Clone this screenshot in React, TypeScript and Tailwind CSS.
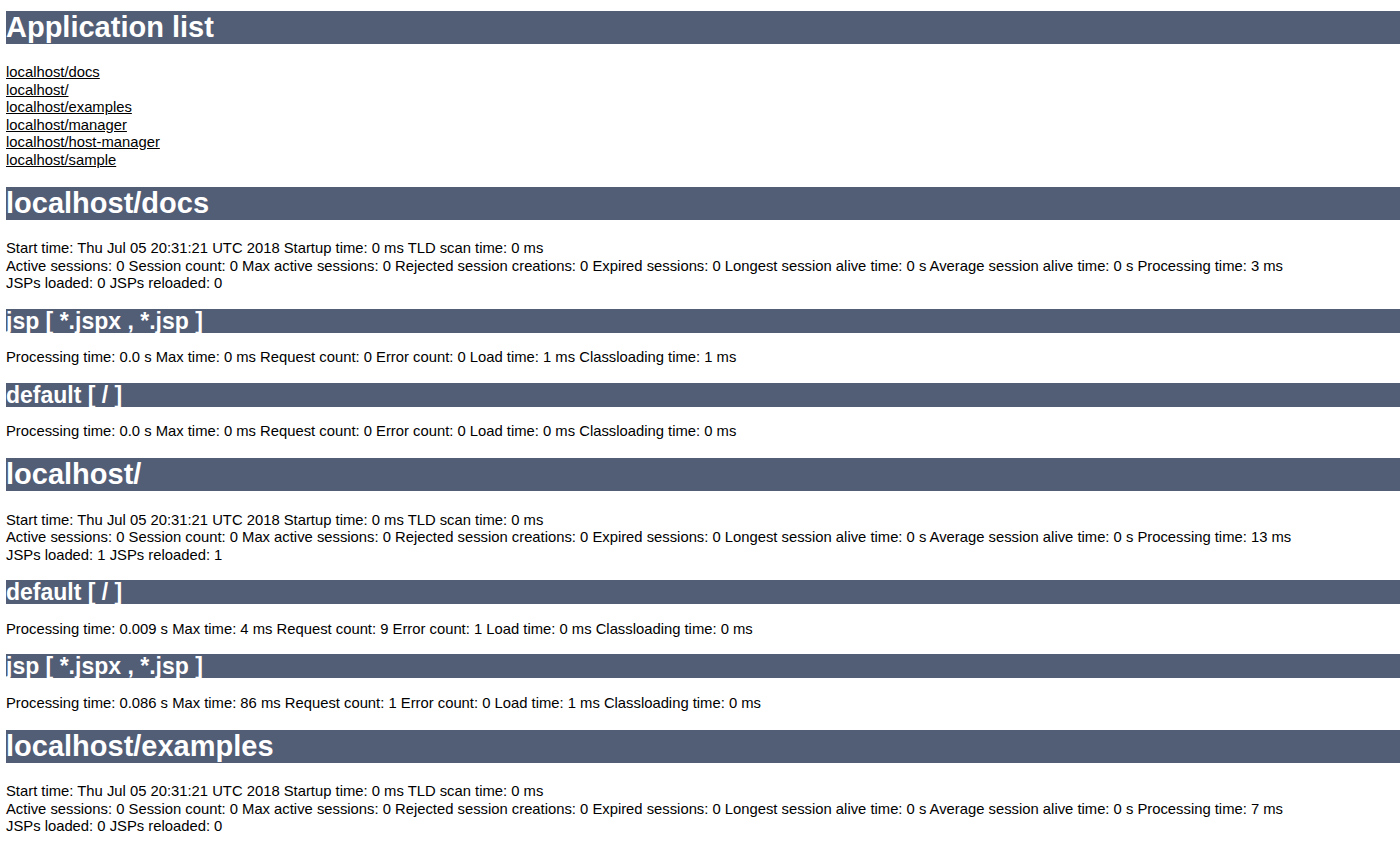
import React from 'react';

type Servlet = { name: string; stats: string };
type App = { name: string; lines: string[]; servlets: Servlet[] };

const apps: App[] = [
  {
    name: 'localhost/docs',
    lines: [
      'Start time: Thu Jul 05 20:31:21 UTC 2018 Startup time: 0 ms TLD scan time: 0 ms',
      'Active sessions: 0 Session count: 0 Max active sessions: 0 Rejected session creations: 0 Expired sessions: 0 Longest session alive time: 0 s Average session alive time: 0 s Processing time: 3 ms',
      'JSPs loaded: 0 JSPs reloaded: 0',
    ],
    servlets: [
      { name: 'jsp [ *.jspx , *.jsp ]', stats: 'Processing time: 0.0 s Max time: 0 ms Request count: 0 Error count: 0 Load time: 1 ms Classloading time: 1 ms' },
      { name: 'default [ / ]', stats: 'Processing time: 0.0 s Max time: 0 ms Request count: 0 Error count: 0 Load time: 0 ms Classloading time: 0 ms' },
    ],
  },
  {
    name: 'localhost/',
    lines: [
      'Start time: Thu Jul 05 20:31:21 UTC 2018 Startup time: 0 ms TLD scan time: 0 ms',
      'Active sessions: 0 Session count: 0 Max active sessions: 0 Rejected session creations: 0 Expired sessions: 0 Longest session alive time: 0 s Average session alive time: 0 s Processing time: 13 ms',
      'JSPs loaded: 1 JSPs reloaded: 1',
    ],
    servlets: [
      { name: 'default [ / ]', stats: 'Processing time: 0.009 s Max time: 4 ms Request count: 9 Error count: 1 Load time: 0 ms Classloading time: 0 ms' },
      { name: 'jsp [ *.jspx , *.jsp ]', stats: 'Processing time: 0.086 s Max time: 86 ms Request count: 1 Error count: 0 Load time: 1 ms Classloading time: 0 ms' },
    ],
  },
  {
    name: 'localhost/examples',
    lines: [
      'Start time: Thu Jul 05 20:31:21 UTC 2018 Startup time: 0 ms TLD scan time: 0 ms',
      'Active sessions: 0 Session count: 0 Max active sessions: 0 Rejected session creations: 0 Expired sessions: 0 Longest session alive time: 0 s Average session alive time: 0 s Processing time: 7 ms',
      'JSPs loaded: 0 JSPs reloaded: 0',
    ],
    servlets: [],
  },
];

const links = [
  'localhost/docs',
  'localhost/',
  'localhost/examples',
  'localhost/manager',
  'localhost/host-manager',
  'localhost/sample',
];

function H1({ children }: { children: React.ReactNode }) {
  return (
    <h1 className="bg-[#525d76] text-white font-bold text-[29px] leading-[33px] h-[33px] whitespace-nowrap">
      {children}
    </h1>
  );
}

function H3({ children }: { children: React.ReactNode }) {
  return (
    <h3 className="bg-[#525d76] text-white font-bold text-[23px] leading-[24px] h-[24px] whitespace-nowrap mt-[16px]">
      {children}
    </h3>
  );
}

export default function App() {
  return (
    <div className="min-h-[841px] bg-white text-black text-[14.8px] leading-[17.5px] pl-[6px] pt-[11px] overflow-hidden" style={{ fontFamily: '"Liberation Sans", Arial, sans-serif' }}>
      <H1>Application list</H1>
      <div className="mt-[20px] flex flex-col">
        {links.map(l => (
          <a key={l} href="#" className="underline w-fit">{l}</a>
        ))}
      </div>

      {apps.map(app => (
        <div key={app.name} className="mt-[17.5px]">
          <H1>{app.name}</H1>
          <div className="mt-[20.5px] whitespace-nowrap">
            {app.lines.map((line, i) => (
              <p key={i}>{line}</p>
            ))}
          </div>
          {app.servlets.map((s, i) => (
            <div key={i}>
              <H3>{s.name}</H3>
              <p className="mt-[16.5px] whitespace-nowrap">{s.stats}</p>
            </div>
          ))}
        </div>
      ))}
    </div>
  );
}
